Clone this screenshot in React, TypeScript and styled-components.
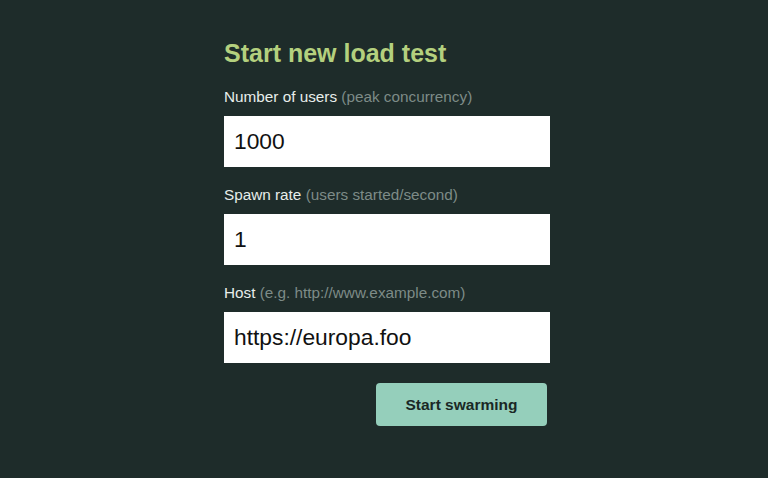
import React from 'react'
import styled, { createGlobalStyle } from 'styled-components'

const GlobalStyle = createGlobalStyle`
  html, body {
    margin: 0;
    padding: 0;
    background: #1e2c2a;
    font-family: "Liberation Sans", Arial, sans-serif;
  }
`

const Page = styled.div`
  width: 768px;
  height: 478px;
  display: flex;
  justify-content: center;
  background: #1e2c2a;
`

const Form = styled.form`
  width: 326px;
  padding-top: 39px;
  margin-left: 6px;
  display: flex;
  flex-direction: column;
`

const Title = styled.h2`
  margin: 0 0 21px;
  font-size: 25px;
  line-height: 28px;
  font-weight: bold;
  color: #b4d07e;
`

const Label = styled.label`
  display: block;
  font-size: 15.3px;
  line-height: 18px;
  color: #e8eeeb;
  margin-bottom: 10px;
`

const Hint = styled.span`
  color: #7d8b87;
`

const Field = styled.input`
  box-sizing: border-box;
  width: 100%;
  height: 51px;
  border: none;
  outline: none;
  border-radius: 0;
  padding: 0 10px;
  margin: 0 0 19px;
  font-family: "Liberation Sans", Arial, sans-serif;
  font-size: 22.8px;
  color: #111;
  background: #fff;
`

const Actions = styled.div`
  display: flex;
  justify-content: flex-end;
  padding-right: 3px;
  margin-top: 1px;
`

const Button = styled.button`
  width: 171px;
  height: 43px;
  border: none;
  border-radius: 4px;
  background: #95cfbb;
  color: #1a2825;
  font-family: "Liberation Sans", Arial, sans-serif;
  font-size: 15.5px;
  font-weight: bold;
  cursor: pointer;
`

export default function App() {
  return (
    <Page>
      <GlobalStyle />
      <Form onSubmit={(e) => e.preventDefault()}>
        <Title>Start new load test</Title>
        <Label htmlFor="users">
          Number of users <Hint>(peak concurrency)</Hint>
        </Label>
        <Field id="users" defaultValue="1000" />
        <Label htmlFor="rate">
          Spawn rate <Hint>(users started/second)</Hint>
        </Label>
        <Field id="rate" defaultValue="1" />
        <Label htmlFor="host">
          Host <Hint>(e.g. http://www.example.com)</Hint>
        </Label>
        <Field id="host" defaultValue="https://europa.foo" />
        <Actions>
          <Button type="submit">Start swarming</Button>
        </Actions>
      </Form>
    </Page>
  )
}
